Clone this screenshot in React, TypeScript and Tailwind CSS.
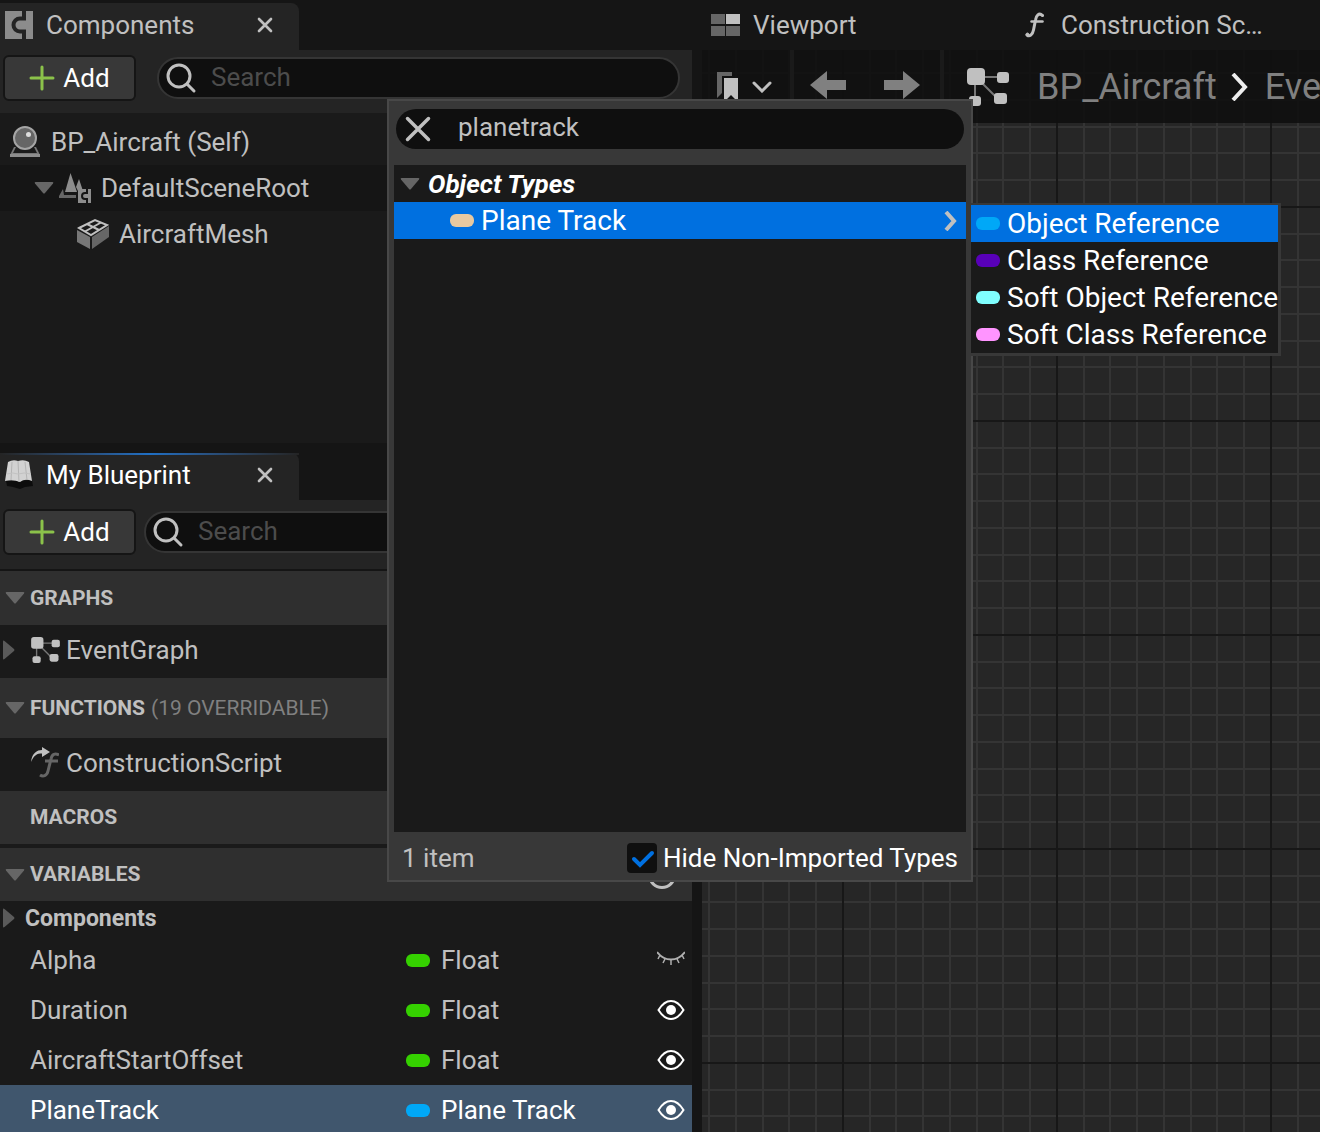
import { useState } from "react";
import type { ReactNode } from "react";

const components = [
  { name: "BP_Aircraft (Self)", icon: "actor" },
  { name: "DefaultSceneRoot", icon: "scene" },
  { name: "AircraftMesh", icon: "mesh" },
];

const variables = [
  { name: "Alpha", type: "Float", pin: "bg-[#35d100]", visible: false, selected: false },
  { name: "Duration", type: "Float", pin: "bg-[#35d100]", visible: true, selected: false },
  { name: "AircraftStartOffset", type: "Float", pin: "bg-[#35d100]", visible: true, selected: false },
  { name: "PlaneTrack", type: "Plane Track", pin: "bg-[#00a8f7]", visible: true, selected: true },
];

const references = [
  { name: "Object Reference", pin: "bg-[#00a8f7]" },
  { name: "Class Reference", pin: "bg-[#5800b8]" },
  { name: "Soft Object Reference", pin: "bg-[#80ffff]" },
  { name: "Soft Class Reference", pin: "bg-[#ff94ff]" },
];

function Pin({ color }: { color: string }) {
  return <span className={`h-[13px] w-6 shrink-0 rounded-md ${color}`} />;
}

function Arrow({ open = true }: { open?: boolean }) {
  return open ? (
    <svg className="h-3 w-5 shrink-0" viewBox="0 0 20 12" fill="#666">
      <path d="M1.5 0h17q1.5 0 .5 1.5l-8 9.5q-1 1-2 0L1 1.5Q0 0 1.5 0z" />
    </svg>
  ) : (
    <svg className="h-5 w-3 shrink-0" viewBox="0 0 12 20" fill="#5a5a5a">
      <path d="M0 1.5Q0 0 1.5 1l9.5 8q1 1 0 2l-9.5 8Q0 20 0 18.5z" />
    </svg>
  );
}

function ComponentsIcon() {
  return (
    <svg className="h-7 w-7 shrink-0" viewBox="0 0 28 28">
      <path d="M0 0h28v28H0z" fill="#8c8c8c" />
      <path d="M19 0v7.500h-4a6.500 6.500 0 0 0 0 13h4V28" fill="none" stroke="#242424" strokeWidth="4" />
    </svg>
  );
}

function BookIcon() {
  return (
    <svg className="h-8 w-7 shrink-0" viewBox="0 0 28 32">
      <path d="M1 22l26-1 1 6-8 1-5 2-7-2-6-1z" fill="#0c0c0c" />
      <path d="M3 3q5-3 10-1 6-2 11 1l3 19q-7-3-12 1-7-3-15-1z" fill="#d2d2d2" />
      <path d="M13 2l1 21M7 3L6 21M20 3l2 18" fill="none" stroke="#b4b4b4" />
      <path d="M2 15q6-2 11 0 6-2 13 0" fill="none" stroke="#c2c2c2" />
    </svg>
  );
}

function ActorIcon() {
  return (
    <svg className="h-8 w-8 shrink-0" viewBox="0 0 32 32">
      <path d="M5 21h22l4 8v2H1v-2z" fill="#777" />
      <path d="M1 28h30v3H1z" fill="#8d8d8d" />
      <path d="M7 21h18l3 6H4z" fill="#1a1a1a" />
      <circle cx="16" cy="12" r="11" fill="#666" stroke="#a5a5a5" strokeWidth="2" />
      <circle cx="19.5" cy="8.5" r="2.5" fill="#ddd" />
    </svg>
  );
}

function SceneIcon() {
  return (
    <svg className="h-8 w-8 shrink-0" viewBox="0 0 32 32" fill="#8d8d8d">
      <path d="M4 17L0 24v2h17v-3H5z" fill="#666" />
      <path d="M11.500 1L6 20h12z" />
      <path d="M20 7l-3 8 2 4h5z" />
      <path d="M19 17h13v14H19z" />
      <path d="M28 17v4h-2a3 3 0 0 0 0 6h2v4" fill="none" stroke="#151515" strokeWidth="2" />
    </svg>
  );
}

function MeshIcon() {
  return (
    <svg className="h-8 w-8 shrink-0" viewBox="0 0 32 32">
      <path d="M0 12l13 7v12L0 24z" fill="#777" />
      <path d="M15 19l17-11v11L15 31z" fill="#666" />
      <path d="M2 10L18 2l12 5-16 10z" fill="#1a1a1a" stroke="#c0c0c0" strokeWidth="2" />
      <path d="M8 13.500L24 4.500M10 6l12 6" stroke="#c0c0c0" strokeWidth="2" />
    </svg>
  );
}

function GraphIcon({ className }: { className: string }) {
  return (
    <svg className={`shrink-0 ${className}`} viewBox="0 0 42 38" fill="#c0c0c0">
      <path d="M10 9h24M8 10v22M12 12l20 20" fill="none" stroke="#777" strokeWidth="2" />
      <rect x="0" y="0" width="18" height="17" rx="4" />
      <rect x="30" y="4" width="12" height="11" rx="3" />
      <rect x="2" y="28" width="12" height="10" rx="3" />
      <rect x="27" y="25" width="13" height="11" rx="3" />
    </svg>
  );
}

function FunctionIcon() {
  return (
    <svg className="h-7 w-5 shrink-0" viewBox="0 0 20 28" fill="none" stroke="#c0c0c0" strokeLinecap="round">
      <path d="M17.500 4.500C14 1 11 5 10.500 9L8.500 19c-1 5-4 7-6.500 5" strokeWidth="3" />
      <path d="M6.500 10.500h11" strokeWidth="2.500" />
      <circle cx="2.500" cy="23.500" r="1.500" fill="#c0c0c0" />
      <circle cx="17.500" cy="4.500" r="1" fill="#c0c0c0" />
    </svg>
  );
}

function OverrideIcon() {
  return (
    <svg className="h-8 w-7 shrink-0" viewBox="0 0 28 32" fill="none">
      <path d="M28 8c-4-2-7-1-8 4l-3 12c-1 5-5 6-8 4M14 14h13" stroke="#666" strokeWidth="3" />
      <path d="M0 15C1 6 6 3 11 3V0l8 5-8 5V6.500C6 6.500 3 8 0 15z" fill="#c0c0c0" />
    </svg>
  );
}

function SearchIcon() {
  return (
    <svg className="h-8 w-8 shrink-0" viewBox="0 0 32 32" fill="none" stroke="#c0c0c0" strokeLinecap="round">
      <circle cx="14" cy="14" r="11" strokeWidth="3" />
      <path d="M22 22l7 7" strokeWidth="3" />
    </svg>
  );
}

function CloseIcon({ className }: { className: string }) {
  return (
    <svg className={className} viewBox="0 0 24 24" fill="none" stroke="#c0c0c0" strokeLinecap="round">
      <path d="M3 3l18 18M21 3L3 21" />
    </svg>
  );
}

function EyeIcon() {
  return (
    <svg className="h-6 w-7" viewBox="0 0 28 24" fill="none">
      <path d="M1.500 12Q7 3 14 3T26.500 12Q21 21 14 21T1.500 12z" stroke="#fff" strokeWidth="2" />
      <circle cx="14" cy="12" r="5" fill="#fff" />
    </svg>
  );
}

function ClosedEyeIcon() {
  return (
    <svg className="h-6 w-7" viewBox="0 0 28 24" fill="none" stroke="#b0b0b0" strokeWidth="2">
      <path d="M0 4Q6 11.500 14 11.500T28 4" />
      <path d="M3 7l-2 4M8 11l-2 4M14 12v5M20 11l2 4M25 7l2 4" strokeWidth="1.5" />
    </svg>
  );
}

function Tab({ title, active = false, children }: { title: string; active?: boolean; children: ReactNode }) {
  return (
    <div className="flex bg-[#151515]">
      <div className="relative flex h-[47px] w-[299px] items-center rounded-tr-lg bg-[#242424] pr-6 pb-1 pl-[5px]">
        {active && (
          <span className="absolute inset-x-0 top-0 h-0.5 bg-linear-to-r from-[#242424] via-[#1f6fc4] to-[#242424]" />
        )}
        {children}
        <h2 className={`ml-[13px] flex-1 ${active ? "text-white" : "text-[#c0c0c0]"}`}>{title}</h2>
        <button aria-label={`Close ${title}`} className="p-0.5">
          <CloseIcon className="h-4 w-4 stroke-[4]" />
        </button>
      </div>
    </div>
  );
}

function AddButton() {
  return (
    <button className="flex h-[46px] w-[133px] shrink-0 items-center justify-center gap-2 rounded-md border-2 border-[#151515] bg-[#383838] text-white">
      <svg className="h-[26px] w-[26px]" viewBox="1 1 26 26" stroke="#8bc24a" strokeWidth="3" strokeLinecap="round">
        <path d="M14 3v22M3 14h22" />
      </svg>
      Add
    </button>
  );
}

function SearchBox({ label }: { label: string }) {
  return (
    <label className="flex h-[42px] flex-1 items-center rounded-full border-2 border-[#353535] bg-[#0f0f0f] pl-1.5">
      <SearchIcon />
      <input
        aria-label={label}
        placeholder="Search"
        className="ml-3.5 w-full min-w-0 bg-transparent pb-0.5 text-[#c0c0c0] outline-none placeholder:text-[#4c4c4c]"
      />
    </label>
  );
}

function Section({ title, note, arrow = true, className, children }: {
  title: string;
  note?: string;
  arrow?: boolean;
  className: string;
  children?: ReactNode;
}) {
  return (
    <h3 className={`flex items-center bg-[#2f2f2f] pr-4 text-[21px] font-bold text-[#c0c0c0] ${className}`}>
      <span className="flex w-[30px] pl-[5px]">{arrow && <Arrow />}</span>
      {title}
      {note && <span className="ml-1.5 font-normal text-[#808080]">{note}</span>}
      {children}
    </h3>
  );
}

function ComponentTree() {
  return (
    <ul className="h-[330px] bg-[#1a1a1a] pt-1.5">
      {components.map((c) => (
        <li key={c.name}>
          {c.icon === "actor" && (
            <div className="flex h-[46px] items-center gap-2.5 pl-[9px]">
              <ActorIcon />
              {c.name}
            </div>
          )}
          {c.icon === "scene" && (
            <div className="flex h-[46px] items-center bg-[#151515] pl-[34px]">
              <Arrow />
              <span className="mr-2.5 ml-[5px]"><SceneIcon /></span>
              {c.name}
            </div>
          )}
          {c.icon === "mesh" && (
            <div className="flex h-[46px] items-center gap-2.5 pl-[77px]">
              <MeshIcon />
              {c.name}
            </div>
          )}
        </li>
      ))}
    </ul>
  );
}

function VariableTable() {
  return (
    <table className="w-full table-fixed">
      <tbody>
        {variables.map((v) => (
          <tr key={v.name} className={v.selected ? "h-[50px] bg-[#40566d] text-white" : "h-[50px]"}>
            <td className="pl-[30px]">{v.name}</td>
            <td className="w-[244px]">
              <span className="flex items-center gap-[11px]">
                <Pin color={v.pin} />
                {v.type}
              </span>
            </td>
            <td className="w-[42px]">
              <button aria-label={`Toggle ${v.name} visibility`} className="ml-[7px] flex">
                {v.visible ? <EyeIcon /> : <ClosedEyeIcon />}
              </button>
            </td>
          </tr>
        ))}
      </tbody>
    </table>
  );
}

function ReferenceMenu() {
  return (
    <ul className="absolute top-[102px] left-[580px] border-t-2 border-r-3 border-b-3 border-l-2 border-[#383838] bg-[#1a1a1a] text-[28px] text-white">
      {references.map((r, i) => (
        <li key={r.name}>
          <button className={`flex h-[37px] w-full items-center gap-[7px] pl-[5px] whitespace-nowrap ${i === 0 ? "bg-[#0070e0]" : ""}`}>
            <Pin color={r.pin} />
            {r.name}
          </button>
        </li>
      ))}
    </ul>
  );
}

function TypePicker() {
  const [query, setQuery] = useState("planetrack");
  const [hideTypes, setHideTypes] = useState(true);

  return (
    <div className="absolute top-[99px] left-[387px] z-10 flex h-[783px] w-[586px] flex-col border-2 border-[#484848] bg-[#383838] px-[5px]">
      <div className="mx-0.5 mt-2 flex h-10 items-center rounded-full bg-[#0f0f0f] pl-2">
        <button aria-label="Clear search">
          <CloseIcon className="h-7 w-7 stroke-[3]" />
        </button>
        <input
          aria-label="Search types"
          value={query}
          onChange={(e) => setQuery(e.target.value)}
          className="ml-[26px] min-w-0 flex-1 bg-transparent pb-1 text-[#c0c0c0] outline-none"
        />
      </div>
      <div className="mt-4 flex-1 bg-[#1a1a1a] text-[28px] text-white">
        <div className="flex h-[37px] items-center gap-2 pl-1.5 text-[26px] font-bold italic">
          <Arrow />
          Object Types
        </div>
        <button className="flex h-[37px] w-full items-center bg-[#0070e0] pr-2 pl-14">
          <Pin color="bg-[#e8c9a0]" />
          <span className="ml-[7px] flex-1 text-left">Plane Track</span>
          <svg className="h-5 w-3.5" viewBox="0 0 14 20" fill="none" stroke="#c0c0c0" strokeWidth="4">
            <path d="M2 1l8 9-8 9" />
          </svg>
        </button>
      </div>
      <div className="flex h-12 items-center justify-between px-2 pt-1">
        <span>1 item</span>
        <label className="flex items-center gap-1.5 text-white">
          <span className="relative flex">
            <input
              type="checkbox"
              checked={hideTypes}
              onChange={(e) => setHideTypes(e.target.checked)}
              className="h-[30px] w-[30px] appearance-none rounded bg-[#0f0f0f]"
            />
            {hideTypes && (
              <svg className="pointer-events-none absolute inset-0" viewBox="0 0 30 30" fill="none" stroke="#0070e0" strokeWidth="4" strokeLinecap="round">
                <path d="M7 16l6 6L25 10" />
              </svg>
            )}
          </span>
          Hide Non-Imported Types
        </label>
      </div>
      <ReferenceMenu />
    </div>
  );
}

function GraphGrid() {
  return (
    <svg className="absolute inset-0 h-full w-full">
      <defs>
        <pattern id="grid" x="140" y="156" width="214" height="214" patternUnits="userSpaceOnUse">
          <g stroke="#343434" strokeWidth="2">
            <path d="M28 0v214M54 0v214M81 0v214M108 0v214M135 0v214M161 0v214M188 0v214" />
            <path d="M0 28h214M0 54h214M0 81h214M0 108h214M0 135h214M0 161h214M0 188h214" />
          </g>
          <path d="M1 0v214M0 1h214" stroke="#171717" strokeWidth="2" />
        </pattern>
      </defs>
      <rect width="100%" height="100%" fill="#262626" />
      <rect width="100%" height="100%" fill="url(#grid)" />
    </svg>
  );
}

function GraphEditor() {
  return (
    <main className="flex min-w-0 flex-col overflow-hidden">
      <div className="flex h-[50px] shrink-0 items-center bg-[#151515] pl-[9px]">
        <svg className="h-[22px] w-[29px]" viewBox="0 0 29 22" fill="#666">
          <path d="M0 0h14v10H0zM0 12h14v10H0zM15 12h14v10H15z" />
          <path d="M15 0h14v10H15z" fill="#c0c0c0" />
        </svg>
        <button className="ml-[13px] w-[272px] text-left">Viewport</button>
        <FunctionIcon />
        <button className="ml-4 whitespace-nowrap">Construction Sc…</button>
      </div>
      <div className="relative flex-1">
        <GraphGrid />
        <div className="relative flex h-[73px] items-center overflow-hidden bg-[#0f0f0f]/90 whitespace-nowrap">
          <svg className="ml-3.5 h-8 w-6 shrink-0" viewBox="0 0 24 32">
            <path d="M1 1h15v4H6v17l-5 5z" fill="#666" />
            <path d="M8 7h14v24l-7-7-7 7z" fill="#c0c0c0" />
          </svg>
          <svg className="ml-3 h-3 w-5 shrink-0" viewBox="0 0 20 12" fill="none" stroke="#c0c0c0" strokeWidth="3" strokeLinecap="round">
            <path d="M2 2l8 8 8-8" />
          </svg>
          <span className="ml-[18px] h-full w-1 shrink-0 bg-[#1a1a1a]" />
          <button aria-label="Back" className="ml-4 pb-1">
            <svg className="h-7 w-9" viewBox="0 0 36 28" fill="#808080">
              <path d="M0 14L17 0v9h19v10H17v9z" />
            </svg>
          </button>
          <button aria-label="Forward" className="ml-[38px] pb-1">
            <svg className="h-7 w-9" viewBox="0 0 36 28" fill="#808080">
              <path d="M36 14L19 0v9H0v10h19v9z" />
            </svg>
          </button>
          <span className="ml-5 h-full w-1 shrink-0 bg-[#1a1a1a]" />
          <GraphIcon className="ml-[23px] h-[38px] w-[42px]" />
          <nav className="flex items-center text-[36px] text-[#808080]">
            <span className="ml-7">BP_Aircraft</span>
            <svg className="mr-4 ml-3.5 h-7 w-[18px]" viewBox="0 0 18 28" fill="none" stroke="#eee" strokeWidth="4">
              <path d="M2 1l12 13L2 27" />
            </svg>
            <span>EventGraph</span>
          </nav>
        </div>
      </div>
    </main>
  );
}

export default function App() {
  return (
    <div className="relative grid h-screen grid-cols-[692fr_618fr] gap-x-2.5 overflow-hidden bg-[#151515] font-['Roboto',sans-serif] text-[26px] leading-none text-[#c0c0c0]">
      <aside className="min-w-0">
        <section className="pt-[3px]">
          <Tab title="Components">
            <ComponentsIcon />
          </Tab>
          <div className="flex items-center gap-[21px] bg-[#242424] pt-[5px] pr-3 pb-3 pl-[3px]">
            <AddButton />
            <SearchBox label="Search components" />
          </div>
          <ComponentTree />
        </section>

        <section className="mt-2.5">
          <Tab title="My Blueprint" active>
            <BookIcon />
          </Tab>
          <div className="flex items-center gap-2 border-b-2 border-[#151515] bg-[#242424] pt-[9px] pr-3 pb-3.5 pl-[3px]">
            <AddButton />
            <SearchBox label="Search blueprint" />
          </div>
          <div className="bg-[#1a1a1a]">
            <Section title="GRAPHS" className="h-[54px]" />
            <div className="flex h-[53px] items-center pb-1 pl-[3px]">
              <Arrow open={false} />
              <GraphIcon className="mr-1.5 ml-4 h-[26px] w-[29px]" />
              EventGraph
            </div>
            <Section title="FUNCTIONS" note="(19 OVERRIDABLE)" className="h-[60px]" />
            <div className="flex h-[53px] items-center gap-[7px] pb-1 pl-[31px]">
              <OverrideIcon />
              ConstructionScript
            </div>
            <Section title="MACROS" arrow={false} className="h-[53px]" />
            <Section title="VARIABLES" className="mt-1 h-[53px]">
              <button aria-label="Add variable" className="ml-auto h-7 w-7 rounded-full border-3 border-[#c0c0c0]" />
            </Section>
            <div className="flex h-[34px] items-center gap-2.5 pl-[3px] text-[23px] font-bold">
              <Arrow open={false} />
              Components
            </div>
            <VariableTable />
          </div>
        </section>
      </aside>

      <GraphEditor />
      <TypePicker />
    </div>
  );
}
